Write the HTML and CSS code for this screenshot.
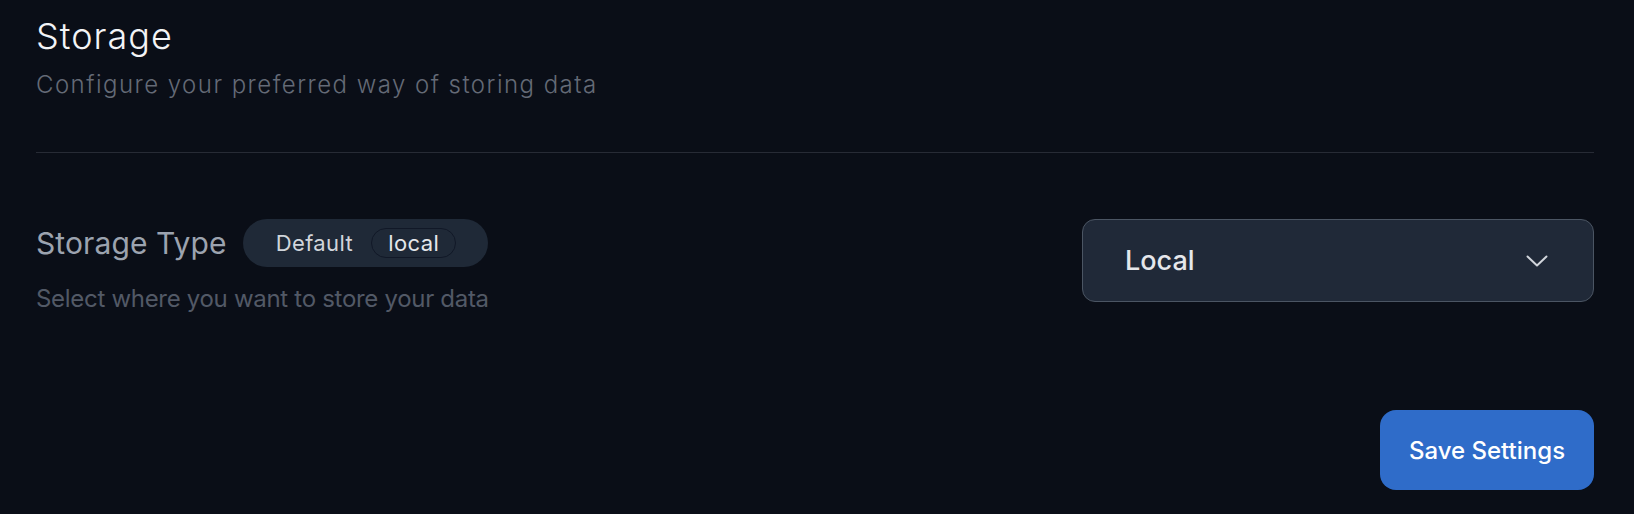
FILE: index.html
```html
<!DOCTYPE html>
<html lang="en">
<head>
<meta charset="utf-8">
<title>Storage Settings</title>
<link rel="stylesheet" href="styles.css">
</head>
<body>
<main class="page">
  <header class="header">
    <h1 class="title">Storage</h1>
    <p class="subtitle">Configure your preferred way of storing data</p>
  </header>
  <hr class="divider">
  <section class="setting">
    <div class="setting-info">
      <div class="label-row">
        <span class="label">Storage Type</span>
        <span class="pill">
          <span class="pill-text">Default</span>
          <span class="chip">local</span>
        </span>
      </div>
      <p class="description">Select where you want to store your data</p>
    </div>
    <div class="select">
      <span class="select-value">Local</span>
      <svg class="chevron" width="22" height="12" viewBox="0 0 22 12" fill="none">
        <path d="M1.5 1.5 L11 10.5 L20.5 1.5" stroke="#d1d5db" stroke-width="2" stroke-linecap="round" stroke-linejoin="round"/>
      </svg>
    </div>
  </section>
  <div class="actions">
    <button class="save-btn">Save Settings</button>
  </div>
</main>
</body>
</html>
```
FILE: styles.css
```css
* { box-sizing: border-box; }
html, body {
  margin: 0;
  padding: 0;
  background: #0a0e17;
  height: 100%;
}
body {
  font-family: Inter, "Noto Sans", sans-serif;
  color: #e5e7eb;
}
.page {
  padding: 16px 40px 0 36px;
}
.header {
  display: flex;
  flex-direction: column;
}
.title {
  margin: 0;
  font-size: 36px;
  line-height: 40px;
  font-weight: 300;
  letter-spacing: 1px;
  color: #f3f4f6;
}
.subtitle {
  margin: 13px 0 0;
  font-size: 24px;
  line-height: 32px;
  font-weight: 300;
  letter-spacing: 1.46px;
  color: #646a76;
}
.divider {
  margin: 51px 0 0;
  border: 0;
  height: 1px;
  background: #272b35;
}
.setting {
  margin-top: 66px;
  display: flex;
  justify-content: space-between;
  align-items: flex-start;
}
.setting-info {
  display: flex;
  flex-direction: column;
}
.label-row {
  display: flex;
  align-items: center;
  gap: 16px;
  height: 48px;
}
.label {
  font-size: 30px;
  color: #9ca3af;
  font-weight: 400;
  letter-spacing: 0.1px;
}
.pill {
  display: flex;
  align-items: center;
  gap: 18px;
  height: 48px;
  padding: 0 32px 0 33px;
  border-radius: 24px;
  background: #1f2937;
}
.pill-text {
  font-size: 22px;
  color: #d1d5db;
  letter-spacing: 0.4px;
}
.chip {
  display: flex;
  align-items: center;
  height: 30px;
  padding: 0 16px;
  border: 1px solid #111827;
  border-radius: 15px;
  font-size: 22px;
  letter-spacing: 0.4px;
  color: #e5e7eb;
}
.description {
  margin: 16px 0 0;
  font-size: 24px;
  line-height: 32px;
  letter-spacing: -0.3px;
  color: #525966;
}
.select {
  width: 512px;
  height: 83px;
  display: flex;
  align-items: center;
  justify-content: space-between;
  padding: 0 45px 0 42px;
  background: #202938;
  border: 1.5px solid #4b5563;
  border-radius: 13px;
}
.select-value {
  font-size: 27px;
  font-weight: 500;
  color: #e5e7eb;
}
.chevron {
  display: block;
}
.actions {
  display: flex;
  justify-content: flex-end;
  margin-top: 95px;
}
.save-btn {
  height: 80px;
  width: 214px;
  border: 0;
  border-radius: 16px;
  background: #2f6cc9;
  color: #ffffff;
  font-family: Inter, "Noto Sans", sans-serif;
  font-size: 24px;
  font-weight: 500;
  cursor: pointer;
}
```
